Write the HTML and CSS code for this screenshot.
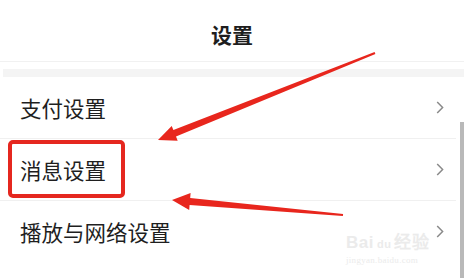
FILE: index.html
```html
<!DOCTYPE html>
<html lang="zh-CN">
<head>
<meta charset="utf-8">
<title>设置</title>
<link rel="stylesheet" href="styles.css">
</head>
<body>
<div class="page">
  <header class="header"><h1 class="title">设置</h1></header>
  <div class="gap"></div>
  <div class="band"></div>
  <ul class="list">
    <li class="row"><span class="label">支付设置</span>
      <svg class="chev" width="8" height="13" viewBox="0 0 8 13"><polyline points="1.2,1 6.6,6.5 1.2,12" fill="none" stroke="#8a8a8a" stroke-width="1.5"/></svg></li>
    <li class="row"><span class="label">消息设置</span>
      <svg class="chev" width="8" height="13" viewBox="0 0 8 13"><polyline points="1.2,1 6.6,6.5 1.2,12" fill="none" stroke="#8a8a8a" stroke-width="1.5"/></svg></li>
    <li class="row"><span class="label">播放与网络设置</span>
      <svg class="chev" width="8" height="13" viewBox="0 0 8 13"><polyline points="1.2,1 6.6,6.5 1.2,12" fill="none" stroke="#8a8a8a" stroke-width="1.5"/></svg></li>
  </ul>
  <div class="scrollbar"></div>
  <div class="highlight"></div>
  <svg class="arrows" width="464" height="278" viewBox="0 0 464 278">
    <polygon fill="#e8261d" points="374.6,52.1 173.4,130.0 171.7,125.9 158,140 177.7,140.7 176.0,136.6 375.4,53.9"/>
    <polygon fill="#e8261d" points="343.1,214.0 190.2,198.1 190.6,193.1 172,200 189.2,210.0 189.6,205.1 342.9,216.0"/>
  </svg>
  <div class="watermark">
    <div class="wm-logo">Bai<span class="wm-du">du</span>经验</div>
    <div class="wm-url">jingyan.baidu.com</div>
  </div>
</div>
</body>
</html>
```
FILE: styles.css
```css
html, body {
  margin: 0;
  padding: 0;
  background: #ffffff;
}
.page {
  position: relative;
  width: 464px;
  height: 278px;
  overflow: hidden;
  background: #ffffff;
  font-family: "Noto Sans CJK SC", "Noto Sans", sans-serif;
  color: #222222;
}
.header {
  height: 61px;
  display: flex;
  align-items: center;
  justify-content: center;
  border-bottom: 1px solid #f1f1f1;
}
.title {
  margin: 0;
  font-size: 21px;
  font-weight: 700;
  color: #1e1e1e;
  line-height: 1;
  padding-top: 8px;
}
.gap {
  height: 7px;
}
.band {
  height: 8px;
  margin-left: 3px;
  background: #f4f4f4;
}
.list {
  list-style: none;
  margin: 0;
  padding: 0;
}
.row {
  height: 61px;
  display: flex;
  align-items: center;
  justify-content: space-between;
  padding: 0 12px 0 20px;
  margin-right: 8px;
  border-bottom: 1px solid #f0f0f0;
}
.row:last-child {
  border-bottom: none;
}
.label {
  font-size: 21.5px;
  line-height: 1;
  color: #1f1f1f;
}
.chev {
  display: block;
}
.scrollbar {
  position: absolute;
  left: 460px;
  top: 122px;
  width: 4px;
  bottom: 0;
  background: #b9b9b9;
}
.highlight {
  position: absolute;
  left: 8px;
  top: 140px;
  width: 109px;
  height: 50px;
  border: 4.5px solid #e5271f;
  border-radius: 5px;
}
.arrows {
  position: absolute;
  left: 0;
  top: 0;
}
.watermark {
  position: absolute;
  left: 346px;
  top: 234px;
  color: #ebebeb;
  font-family: "Liberation Sans", sans-serif;
}
.wm-logo {
  font-size: 17px;
  line-height: 18px;
  font-weight: 700;
  letter-spacing: 0.5px;
}
.wm-du {
  font-size: 11px;
  margin: 0 3px;
}
.wm-url {
  font-family: "Liberation Serif", serif;
  font-size: 9px;
  line-height: 10px;
  margin-top: 2px;
  letter-spacing: 0.3px;
}
```
